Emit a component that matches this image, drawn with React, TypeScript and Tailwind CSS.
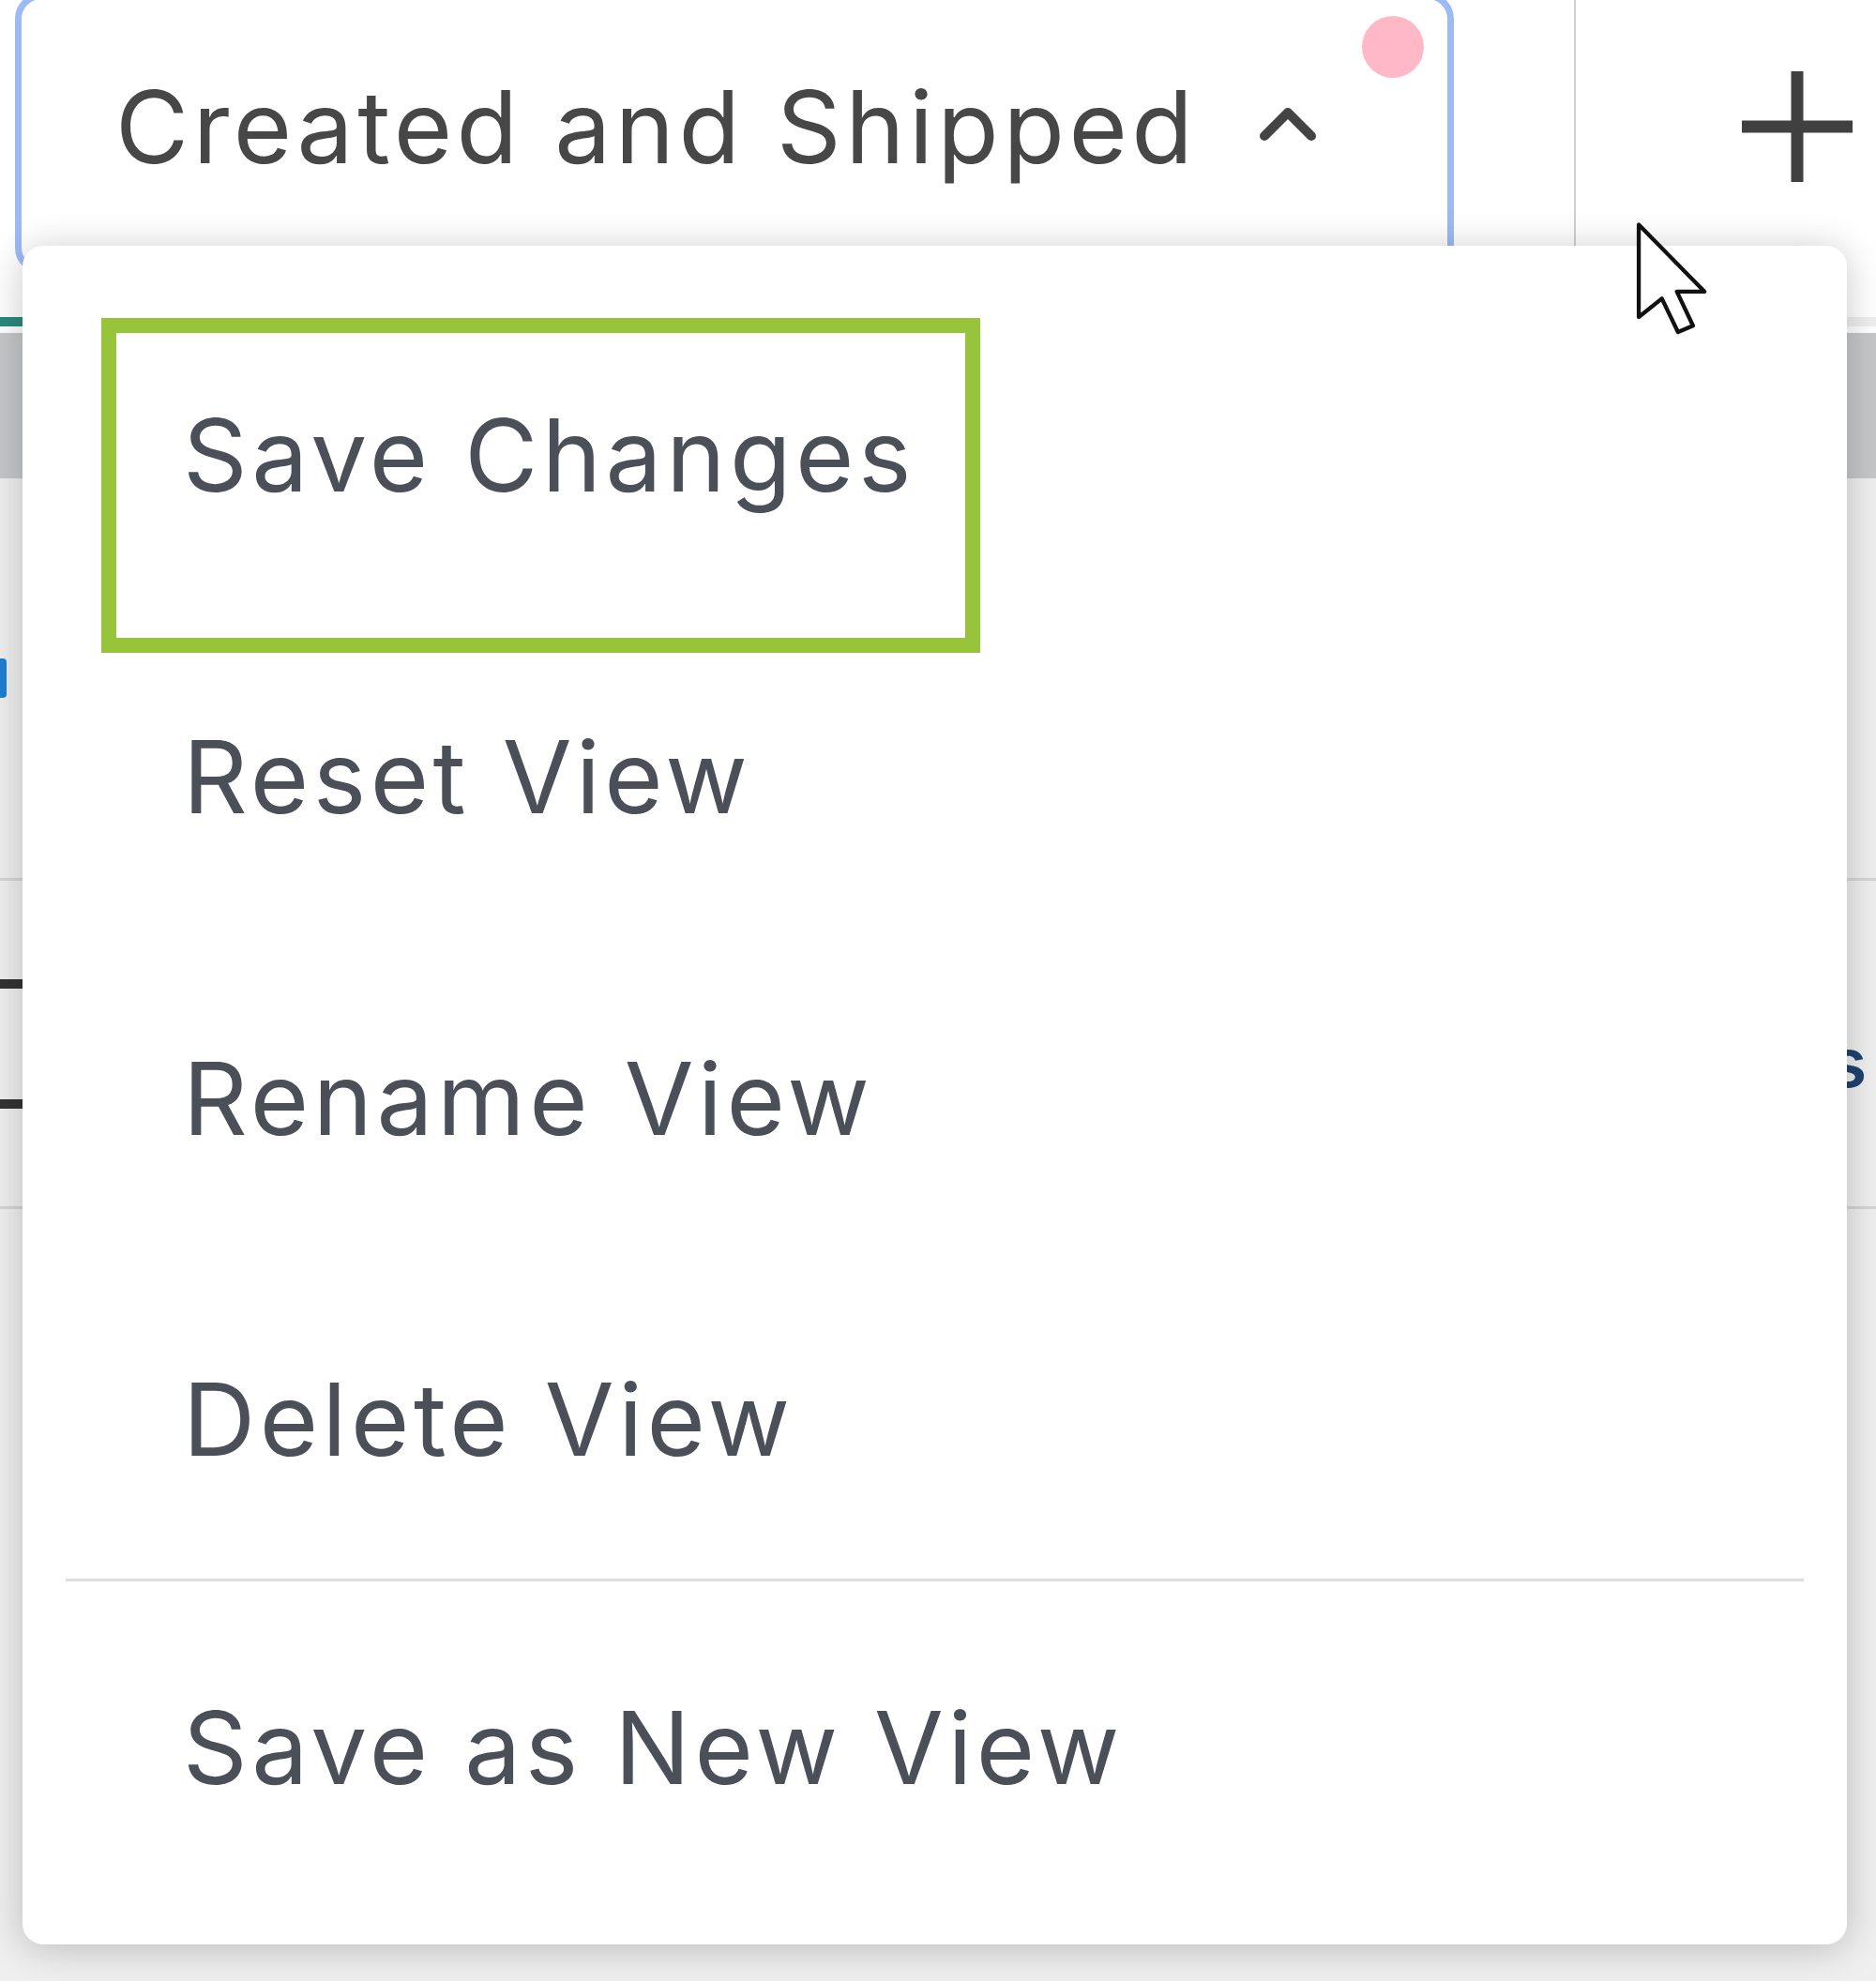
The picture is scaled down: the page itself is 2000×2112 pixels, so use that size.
import React from 'react'

const items = ['Save Changes', 'Reset View', 'Rename View', 'Delete View']

function PlusIcon() {
  return (
    <svg width="118" height="118" viewBox="0 0 118 118" fill="none">
      <line x1="59" y1="0" x2="59" y2="118" stroke="#404040" strokeWidth="13" />
      <line x1="0" y1="59" x2="118" y2="59" stroke="#404040" strokeWidth="13" />
    </svg>
  )
}

function ChevronUp() {
  return (
    <svg width="62" height="40" viewBox="0 0 62 40" fill="none">
      <polyline points="6,34 31,9 56,34" stroke="#444" strokeWidth="10" strokeLinecap="round" strokeLinejoin="round" />
    </svg>
  )
}

function Cursor() {
  return (
    <svg width="80" height="126" viewBox="-0.5 -0.5 13 20" fill="none">
      <path
        d="M0 0 L0 16 L4 12.8 L6.8 18.6 L9.4 17.5 L6.6 11.6 L11.4 11.6 Z"
        fill="#fff"
        stroke="#111"
        strokeWidth="0.7"
        strokeLinejoin="round"
      />
    </svg>
  )
}

export default function App() {
  return (
    <div
      className="relative h-[2112px] w-[2000px] overflow-hidden bg-[#efefef]"
      style={{ fontFamily: 'Inter, "Open Sans", sans-serif' }}
    >
      {/* toolbar */}
      <header className="flex h-[262px] items-start bg-white">
        <div className="relative ml-[16px] mt-[-8px] flex h-[300px] w-[1534px] items-center rounded-[28px] border-[7px] border-[#9dbaf7] bg-white pl-[100px]">
          <span className="mt-[-14px] text-[107px] leading-none tracking-[4.5px] text-[#474747]">Created and Shipped</span>
          <span className="ml-[66px] mt-[-22px]">
            <ChevronUp />
          </span>
          <span className="absolute right-[25px] top-[18px] h-[66px] w-[66px] rounded-full bg-[#ffb8c6]" />
        </div>
        <div className="ml-[128px] h-[262px] w-[2px] bg-[#d0d0d0]" />
        <div className="ml-[177px] mt-[76px]">
          <PlusIcon />
        </div>
      </header>

      {/* page underneath */}
      <div className="h-[76px] bg-white" />
      <div className="h-[10px] w-[320px] bg-[#2a8a7c]" />
      <div className="h-[7px] bg-white" />
      <div className="h-[155px] bg-[#c5c7c9]" />
      <div className="h-[192px]" />
      <div className="h-[42px] w-[7px] rounded-r-[4px] bg-[#1e7fd6]" />
      <div className="h-[192px]" />
      <div className="h-[3px] bg-[#d5d5d5]" />
      <div className="flex h-[347px] items-center justify-between">
        <div className="flex w-[60px] flex-col gap-[118px]">
          <div className="h-[10px] bg-[#333]" />
          <div className="h-[10px] bg-[#333]" />
        </div>
        <span className="mt-[40px] pr-[10px] text-[72px] font-semibold text-[#1f4270]">Items</span>
      </div>
      <div className="h-[3px] bg-[#d5d5d5]" />

      {/* cursor */}
      <div className="absolute left-[1744px] top-[235px] z-20">
        <Cursor />
      </div>

      {/* dropdown menu */}
      <div className="absolute left-[24px] top-[262px] z-10 flex h-[1811px] w-[1945px] flex-col rounded-[22px] bg-white pt-[52px] shadow-[0_4px_40px_rgba(0,0,0,0.22)]">
        <div className="absolute left-[84px] top-[77px] h-[357px] w-[937px] border-[16px] border-[#97c43b]" />
        {items.map((label, i) => (
          <div
            key={label}
            className={`flex items-center pl-[171px] ${i === 3 ? 'h-[340px]' : 'h-[343px]'}`}
          >
            <span className="text-[107px] leading-none tracking-[4.5px] text-[#4a4f58]">{label}</span>
          </div>
        ))}
        <div className="mx-[46px] h-[3px] bg-[#dddddd]" />
        <div className="flex h-[354px] items-center pl-[171px]">
          <span className="text-[107px] leading-none tracking-[4.5px] text-[#4a4f58]">Save as New View</span>
        </div>
      </div>
    </div>
  )
}
